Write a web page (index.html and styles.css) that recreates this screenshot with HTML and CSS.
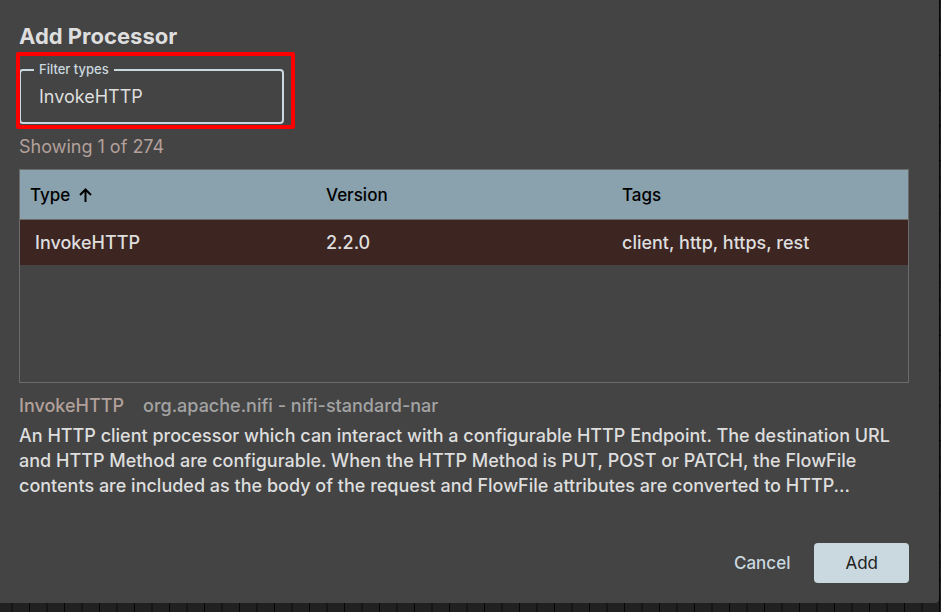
FILE: index.html
```html
<!DOCTYPE html>
<html lang="en">
<head>
<meta charset="utf-8">
<title>Add Processor</title>
<link rel="stylesheet" href="styles.css">
</head>
<body>
<main class="dialog">
  <h1 class="title">Add Processor</h1>
  <div class="highlight">
    <fieldset class="field">
      <legend class="field-legend"><label for="filter">Filter types</label></legend>
      <input class="field-input" id="filter" type="text" value="InvokeHTTP">
    </fieldset>
  </div>
  <p class="count">Showing 1 of 274</p>
  <div class="listing">
    <table class="types">
      <thead>
        <tr>
          <th scope="col" aria-sort="ascending"><span class="sorted">Type
            <svg class="arrow" viewBox="0 0 14 16" aria-hidden="true"><path d="M7.500 14V2M2 7L7.500 1.500l5.500 5.500"/></svg></span></th>
          <th scope="col">Version</th>
          <th scope="col">Tags</th>
        </tr>
      </thead>
      <tbody>
        <tr>
          <td class="name">InvokeHTTP</td>
          <td>2.2.0</td>
          <td>client, http, https, rest</td>
        </tr>
      </tbody>
    </table>
  </div>
  <div class="bundle">
    <span class="bundle-type">InvokeHTTP</span>
    <span>org.apache.nifi - nifi-standard-nar</span>
  </div>
  <p class="description">An HTTP client processor which can interact with a configurable HTTP Endpoint. The destination URL and HTTP Method are configurable. When the HTTP Method is PUT, POST or PATCH, the FlowFile contents are included as the body of the request and FlowFile attributes are converted to HTTP...</p>
  <div class="actions">
    <button class="button" type="button">Cancel</button>
    <button class="button primary" type="button">Add</button>
  </div>
</main>
</body>
</html>
```

FILE: styles.css
```css
* {
  box-sizing: border-box;
}

body {
  margin: 0;
  min-height: 100vh;
  padding: 0 2px 9px 0;
  display: flex;
  background:
    repeating-linear-gradient(90deg, transparent 0 11px, #161616 11px 13px, transparent 13px 29px, #070707 29px 30px, transparent 30px 35px),
    repeating-linear-gradient(180deg, transparent 0 2px, #161616 2px 4px, transparent 4px 20px, #070707 20px 21px, transparent 21px 35px),
    #212121;
  font: 500 18px/25px Inter, "Liberation Sans", sans-serif;
  color: #dedede;
}

.dialog {
  flex: 1;
  display: flex;
  flex-direction: column;
  padding: 22px 30px 20px 19px;
  background: #444;
  border-bottom-right-radius: 4px;
}

.title {
  margin: 0;
  font-size: 22px;
  line-height: 28px;
  font-weight: 700;
}

.highlight {
  position: relative;
  width: 265px;
  margin-top: 12px;
}

.highlight::after {
  content: "";
  position: absolute;
  inset: -10px -11px -5px -3px;
  border: 4px solid #f00;
  border-radius: 2px;
  pointer-events: none;
}

.field {
  margin: 0;
  padding: 0 18px 0 13px;
  border: 2px solid #cad8df;
  border-radius: 4px;
  min-width: 0;
  height: 62px;
}

.field-legend {
  padding: 0 5px;
  font-size: 13px;
  line-height: 15px;
  color: #cad8df;
}

.field-input {
  width: 100%;
  height: 38px;
  padding: 0 5px;
  border: 0;
  outline: 0;
  background: none;
  font: inherit;
  font-weight: 400;
  color: inherit;
}

.count {
  margin: 10px 0;
  font-weight: 400;
  color: #b3a09b;
}

.listing {
  height: 214px;
  border: 1px solid #6b6b6b;
}

.types {
  width: 100%;
  table-layout: fixed;
  border-collapse: separate;
  border-spacing: 0;
}

.types th,
.types td {
  padding: 0 10px;
  text-align: left;
  font-weight: 500;
}

.types th {
  height: 50px;
  padding-top: 2px;
  background: #8aa2ae;
  border-bottom: 1px solid #6b6b6b;
  color: #000;
  font-size: 17px;
}

.types td {
  height: 45px;
  background: #3d2522;
}

.types .name {
  padding-left: 15px;
}

.sorted {
  display: flex;
  align-items: center;
  gap: 8px;
}

.arrow {
  width: 14px;
  height: 16px;
  fill: none;
  stroke: currentColor;
  stroke-width: 2;
}

.bundle {
  display: flex;
  gap: 19px;
  margin-top: 10px;
  color: #a3a3a3;
}

.bundle-type {
  color: #b3a09b;
}

.description {
  margin: 5px 0 0;
}

.actions {
  display: flex;
  justify-content: flex-end;
  gap: 8px;
  margin-top: auto;
}

.button {
  height: 40px;
  padding: 0 16px;
  border: 0;
  border-radius: 4px;
  background: none;
  font: inherit;
  font-size: 17px;
  color: #cad8df;
}

.primary {
  padding: 0 31px;
  background: #cad8df;
  color: #212121;
  font-weight: 400;
}
```
